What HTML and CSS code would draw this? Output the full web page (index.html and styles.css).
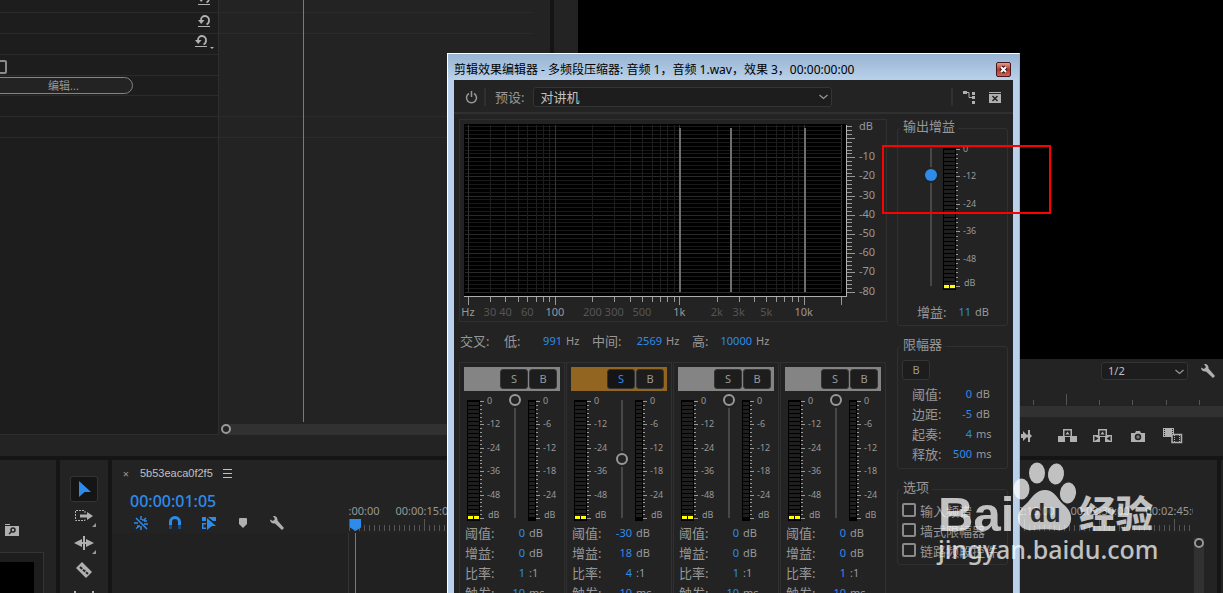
FILE: index.html
```html
<!DOCTYPE html>
<html lang="zh-CN">
<head>
    <meta charset="UTF-8" />
    <meta name="viewport" content="width=device-width, initial-scale=1.0"/>
    <title>剪辑效果编辑器</title>
    <link rel="stylesheet" href="styles.css">
</head>
<body>
    <div class="workspace">
        <div class="upper">
            <section class="effect-controls">
                <div class="props">
                    <div class="prop"><button class="reset" aria-label="重置"><svg width="13" height="13"><use href="#i-reset"/></svg></button></div>
                    <div class="prop"><button class="reset" aria-label="重置"><svg width="13" height="13"><use href="#i-reset"/></svg></button></div>
                    <div class="prop"><button class="reset menu" aria-label="重置"><svg width="13" height="13"><use href="#i-reset"/></svg></button></div>
                    <div class="prop"><input type="checkbox" class="tick" aria-label="旁路"></div>
                    <div class="prop short"><button class="edit">编辑...</button></div>
                    <div class="prop"></div>
                    <div class="prop"></div>
                </div>
                <div class="keyframes">
                    <div class="lane"></div>
                    <div class="lane"></div>
                    <div class="lane tall"></div>
                    <div class="lane"></div>
                    <div class="needle"></div>
                    <div class="zoombar"><i class="ring"></i></div>
                </div>
            </section>

            <section class="monitor">
                <div class="preview"></div>
                <div class="monitor-options">
                    <div class="drop quality">
                        <select aria-label="回放分辨率"><option>1/2</option></select>
                        <svg width="9" height="6"><use href="#i-chevron"/></svg>
                    </div>
                    <button class="icon-btn" aria-label="设置"><svg width="16" height="16"><use href="#i-wrench"/></svg></button>
                </div>
                <svg class="monitor-ruler" id="monitorRuler"></svg>
                <div class="monitor-scroll"></div>
                <div class="transport">
                    <button class="icon-btn" aria-label="转到出点"><svg width="20" height="16" fill="#b0b0b0"><path d="M-2 6h2V3l5 5-5 5v-3h-2zM5 2h2v4l2 2-2 2v4H5v-4L3 8l2-2z"/></svg></button>
                    <button class="icon-btn" aria-label="提升"><svg width="20" height="16" fill="#b0b0b0"><path d="M0 8h5V1h9v7h5v6h-7V9H7v5H0zM6.500 2.500V8h6V2.500z" fill-rule="evenodd"/><path d="M9.500 3.500l2 3h-4z"/></svg></button>
                    <button class="icon-btn" aria-label="提取"><svg width="20" height="16" fill="#b0b0b0"><path d="M0 7h5V1h9v6h5v7h-7V9H7v5H0zM6.500 2.500V8h6V2.500z" fill-rule="evenodd"/><path d="M9.500 3.500l2 3h-4z"/><path fill="#232323" d="M1.500 8l4 2.500-4 2.500zM17.500 8l-4 2.500 4 2.500z"/></svg></button>
                    <button class="icon-btn" aria-label="导出帧"><svg width="20" height="16"><path fill="#b0b0b0" d="M3 5h4l1-2h4l1 2h4v9H3z"/><circle cx="10" cy="9" r="2.500" fill="#777" stroke="#232323" stroke-width="1.500"/></svg></button>
                    <button class="icon-btn" aria-label="比较视图"><svg width="20" height="18"><path fill="#b0b0b0" d="M0 1h11v9H0z"/><path stroke="#232323" stroke-dasharray="1 1" d="M1.500 2v8M9.500 2v8"/><path fill="#232323" stroke="#b0b0b0" stroke-width="1.500" d="M9 7.500h9.500v8H9z"/><path stroke="#b0b0b0" stroke-dasharray="1 1" d="M11.500 8v8M16.500 8v8"/></svg></button>
                </div>
            </section>
        </div>

        <div class="lower">
            <section class="project">
                <button class="icon-btn bin" aria-label="搜索素材箱"><svg width="15" height="12"><path fill="#b0b0b0" d="M0 0h5v1H0zM0 2h14v10H0z"/><circle cx="8" cy="6" r="2" fill="none" stroke="#232323" stroke-width="1.500"/><path stroke="#232323" stroke-width="1.500" d="M6.500 7.500L4 10"/></svg></button>
                <div class="thumbs"><div class="thumb"></div></div>
            </section>

            <section class="tools">
                <button class="tool active" aria-label="选择工具"><svg width="20" height="20"><path fill="#2d8ceb" d="M5 2l12 11h-6.500L5 18z"/></svg></button>
                <button class="tool more" aria-label="轨道选择工具"><svg width="20" height="20"><path fill="none" stroke="#b0b0b0" stroke-dasharray="2 1" d="M10 4.500H1.500v10H11V13M11 7V4"/><path fill="#b0b0b0" d="M6 8.500h7V6l6 4-6 4v-2.500H6z"/></svg></button>
                <button class="tool more" aria-label="波纹编辑工具"><svg width="20" height="20" fill="#b0b0b0"><path d="M9 3h2v14H9zM0 10l8-4v3h4V6l8 4-8 4v-3H8v3z"/></svg></button>
                <button class="tool" aria-label="剃刀工具"><svg width="20" height="20"><path fill="#b0b0b0" d="M2 8l6-6 10 10-6 6z"/><path stroke="#232323" stroke-width="2" stroke-dasharray="3 1" d="M6 7l8 7"/></svg></button>
                <button class="tool" aria-label="外滑工具"><svg width="20" height="20" fill="#b0b0b0"><path d="M0 4h2v12H0zM18 4h2v12h-2zM2 9h16v2H2z"/></svg></button>
            </section>

            <section class="timeline">
                <div class="sequence">
                    <div class="tab">
                        <button class="close-tab" aria-label="关闭序列">×</button>
                        <span>5b53eaca0f2f5</span>
                        <svg width="9" height="9"><path stroke="#c0c0c0" d="M0 .5h9M0 4.500h9M0 8.500h9"/></svg>
                    </div>
                    <div class="timecode">00:00:01:05</div>
                    <div class="switches">
                        <button class="icon-btn" aria-label="嵌套"><svg width="16" height="16" stroke="#2d8ceb" stroke-width="1.500"><path d="M8 1v4M8 11v4M1 8h4M11 6h3M11 9h4M3 3l11 11M4 11h3M3 13.500l3-2M13 3l-2.500 2.500M9 5h3"/></svg></button>
                        <button class="icon-btn" aria-label="对齐"><svg width="16" height="16" fill="none" stroke-width="3"><path stroke="#2d8ceb" d="M3.500 10V7a4.500 4.500 0 0 1 9 0v3"/><path stroke="#1c4c7c" d="M3.500 10v4M12.500 10v4"/></svg></button>
                        <button class="icon-btn" aria-label="链接选择项"><svg width="16" height="16" fill="#2d8ceb"><path d="M1 2h4v4H1zM7 2h8v4h-3L7 2zM1 8h4v1.500H2.500v3H5V14H1zM6 3l9 8h-4l-5 4z"/></svg></button>
                        <button class="icon-btn" aria-label="添加标记"><svg width="16" height="16"><path fill="#b0b0b0" d="M4 4q0-1 1-1h6q1 0 1 1v5l-4 4-4-4z"/></svg></button>
                        <button class="icon-btn" aria-label="时间轴设置"><svg width="16" height="16"><use href="#i-wrench"/></svg></button>
                    </div>
                </div>
                <div class="time-ruler">
                    <svg id="timeRuler"></svg>
                    <div class="playhead"></div>
                </div>
                <div class="track-heads"></div>
                <div class="tracks"></div>
                <div class="track-scroll"><i class="ring"></i></div>
            </section>
            <section class="audio-meters"></section>
        </div>
    </div>

    <div class="window">
        <div class="titlebar">
            <span>剪辑效果编辑器 - 多频段压缩器: 音频 1，音频 1.wav，效果 3，00:00:00:00</span>
            <button class="close-window" aria-label="关闭"><svg width="9" height="9"><path d="M2 2l5 5M7 2L2 7" stroke="#3a1018" stroke-width="4"/><path d="M2 2l5 5M7 2L2 7" stroke="#fff" stroke-width="2"/></svg></button>
        </div>
        <div class="client">
            <div class="toolbar">
                <button class="icon-btn" aria-label="电源"><svg width="13" height="13" fill="none" stroke="#989898" stroke-width="1.500"><path d="M4 2.500a5 5 0 1 0 5 0M6.500 0v6"/></svg></button>
                <i class="divider"></i>
                <label for="preset">预设:</label>
                <div class="drop preset">
                    <select id="preset"><option>对讲机</option></select>
                    <svg width="9" height="6"><use href="#i-chevron"/></svg>
                </div>
                <i class="divider push"></i>
                <button class="icon-btn" aria-label="通道映射"><svg width="13" height="13" fill="#b0b0b0"><path d="M0 0h4v3H0zM9 1h3v3H9zM9 5h3v3H9zM9 10h3v3H9z"/><path d="M3 1.500h3v5h4" fill="none" stroke="#b0b0b0"/></svg></button>
                <button class="icon-btn" aria-label="切换"><svg width="13" height="13"><path fill="#b0b0b0" d="M0 1h12v1H0zM0 3h12v9H0z"/><path stroke="#232323" stroke-width="1.500" d="M3.500 5l5 5M8.500 5l-5 5"/></svg></button>
            </div>

            <div class="compressor">
                <div class="main-col">
                    <div class="graph"><svg id="graph" width="426" height="201"></svg></div>
                    <div class="crossover">
                        <span>交叉:</span>
                        <span>低:</span><b>991</b><em>Hz</em>
                        <span>中间:</span><b>2569</b><em>Hz</em>
                        <span>高:</span><b>10000</b><em>Hz</em>
                    </div>
                    <div class="bands" id="bands"></div>
                </div>

                <div class="side-col">
                    <fieldset class="output">
                        <legend>输出增益</legend>
                        <div class="meters">
                            <input type="range" class="fader" min="-18" max="18" value="11" aria-label="输出增益">
                            <svg class="meter" id="outputMeter" width="40" height="142"></svg>
                        </div>
                        <div class="param"><span>增益:</span><b>11</b><em>dB</em></div>
                    </fieldset>
                    <fieldset class="limiter">
                        <legend>限幅器</legend>
                        <button class="flat">B</button>
                        <div class="param"><span>阈值:</span><b>0</b><em>dB</em></div>
                        <div class="param"><span>边距:</span><b>-5</b><em>dB</em></div>
                        <div class="param"><span>起奏:</span><b>4</b><em>ms</em></div>
                        <div class="param"><span>释放:</span><b>500</b><em>ms</em></div>
                    </fieldset>
                    <fieldset class="options">
                        <legend>选项</legend>
                        <label><input type="checkbox" class="tick">输入频谱</label>
                        <label><input type="checkbox" class="tick">墙式限幅器</label>
                        <label><input type="checkbox" class="tick">链路频段控件</label>
                    </fieldset>
                </div>
            </div>
        </div>
    </div>

    <div class="highlight"></div>

    <div class="watermark">
        <div class="brand">
            <span class="bai">Bai</span>
            <span class="paw">
                <svg width="64" height="70" fill="#fff">
                    <ellipse cx="8.500" cy="27" rx="8" ry="10.500"/>
                    <ellipse cx="24" cy="11" rx="8" ry="10.500"/>
                    <ellipse cx="43" cy="12" rx="8" ry="10.500" transform="rotate(8 43 12)"/>
                    <ellipse cx="55" cy="31" rx="8" ry="10.500" transform="rotate(8 55 31)"/>
                    <path d="M32 28c8 0 11 6 16 12 5 5 11 9 10 18-1 8-7 11-14 10-8-1-16-1-24 0-8 1-14-3-15-10-1-9 5-13 10-18 5-6 9-12 17-12z"/>
                </svg>
                <i>du</i>
            </span>
            <span class="jy">经验</span>
        </div>
        <div class="site">jingyan.baidu.com</div>
    </div>

    <svg class="defs" width="0" height="0">
        <symbol id="i-reset" viewBox="0 0 13 13"><path fill="none" stroke="#b0b0b0" stroke-width="1.800" d="M3 6V5a4 4 0 0 1 4-4 4 4 0 0 1 4 4.500q0 3-2.500 4"/><path fill="#b0b0b0" d="M0 5h6.500L3.200 9zM0 11h12v1H0z"/></symbol>
        <symbol id="i-chevron" viewBox="0 0 9 6"><path fill="none" stroke="#989898" stroke-width="1.200" d="M.5 1l4 3.500 4-3.500"/></symbol>
        <symbol id="i-wrench" viewBox="0 0 16 16"><path fill="#b0b0b0" d="M4 1C6.500.5 9 2.500 8.500 5.500l6.500 7.500-2 2L6 8.500C3.500 9 1 7.500 1 4.500l3 1.500L6 4z"/></symbol>
    </svg>

    <script>
        const NS = 'http://www.w3.org/2000/svg';

        function add(svg, tag, attrs, text) {
            const el = document.createElementNS(NS, tag);
            for (const key in attrs) el.setAttribute(key, attrs[key]);
            if (text !== undefined) el.textContent = text;
            svg.appendChild(el);
        }

        function rect(svg, x, y, width, height, fill) {
            add(svg, 'rect', { x: Math.round(x), y: Math.round(y), width, height, fill });
        }

        // Frequency response grid
        function drawGraph() {
            const svg = document.getElementById('graph');
            const fx = hz => 8 + Math.log10(hz / 20) * 124.4;
            const dy = db => 18 - db * 1.92;
            const freqs = [20];
            for (let d = 10; d <= 1000; d *= 10) {
                for (let n = d === 10 ? 3 : 2; n <= 10; n++) freqs.push(n * d);
            }
            freqs.push(20000);
            const isMajor = hz => [20, 100, 1000, 10000, 20000].includes(hz);

            rect(svg, 4, 4, 382, 173, '#000');
            for (let db = 6; db >= -80; db -= 2) {
                const major = db % 10 === 0;
                rect(svg, 5, dy(db), 377, 1, major ? '#2a2a2a' : '#191919');
                rect(svg, 387, dy(db), major ? 8 : 5, 1, '#989898');
                if (major && db < 0) add(svg, 'text', { x: 399, y: dy(db) + 3 }, db);
            }
            freqs.forEach(hz => {
                rect(svg, fx(hz), 5, 1, 168, isMajor(hz) ? '#333' : '#1e1e1e');
                rect(svg, fx(hz), 177, 1, isMajor(hz) ? 8 : 5, '#989898');
            });
            [991, 2569, 10000].forEach(hz => rect(svg, fx(hz), 8, 2, 164, '#6e6e6e'));
            rect(svg, 4, 176, 383, 1, '#b0b0b0');
            rect(svg, 386, 5, 1, 172, '#b0b0b0');

            add(svg, 'text', { x: 399, y: 10 }, 'dB');
            const names = { 20: 'Hz', 30: '30', 40: '40', 60: '60', 100: '100', 200: '200', 300: '300', 500: '500', 1000: '1k', 2000: '2k', 3000: '3k', 5000: '5k', 10000: '10k' };
            for (const hz in names) {
                add(svg, 'text', { x: fx(hz), y: 196, 'text-anchor': 'middle', class: isMajor(+hz) ? '' : 'dim' }, names[hz]);
            }
        }

        // Level meter: bar, scale and labels
        function drawMeter(svg, width, height, step, labels, lit) {
            rect(svg, 0, 0, width, height, '#000');
            for (let y = 2; y < height - 3; y += 4) rect(svg, 1, y, width - 2, 3, '#1e1e1e');
            if (lit) {
                rect(svg, 1, height - 5, 5, 3, '#ff0');
                rect(svg, 7, height - 5, 5, 3, '#ff0');
            }
            for (let i = 0; i <= 30; i++) {
                rect(svg, width, 1 + i * step / 6, i % 6 ? 2 : 4, 1, '#989898');
            }
            labels.forEach((label, i) => add(svg, 'text', { x: width + 7, y: 4 + i * step }, label));
            add(svg, 'text', { x: width + 8, y: step * 5 + 1 }, 'dB');
        }

        const bands = [
            { threshold: 0, gain: 0, ratio: 1, attack: 10 },
            { threshold: -30, gain: 18, ratio: 4, attack: 10, solo: true },
            { threshold: 0, gain: 0, ratio: 1, attack: 10 },
            { threshold: 0, gain: 0, ratio: 1, attack: 10 }
        ];

        function param(name, value, unit) {
            return `<div class="param"><span>${name}:</span><b>${value}</b><em>${unit}</em></div>`;
        }

        function drawBands() {
            const container = document.getElementById('bands');
            bands.forEach(band => {
                const div = document.createElement('div');
                div.className = band.solo ? 'band solo' : 'band';
                div.innerHTML = `
                    <div class="band-head"><button>S</button><button>B</button></div>
                    <div class="meters">
                        <svg class="meter level" width="42" height="121"></svg>
                        <input type="range" class="fader" min="-60" max="0" value="${band.threshold}" aria-label="阈值">
                        <svg class="meter reduction" width="32" height="121"></svg>
                    </div>
                    ${param('阈值', band.threshold, 'dB')}
                    ${param('增益', band.gain, 'dB')}
                    ${param('比率', band.ratio, ':1')}
                    ${param('触发', band.attack, 'ms')}`;
                container.appendChild(div);
                drawMeter(div.querySelector('.level'), 13, 121, 23.4, [0, -12, -24, -36, -48], true);
                drawMeter(div.querySelector('.reduction'), 8, 121, 23.4, [0, -6, -12, -18, -24], false);
            });
        }

        function drawRulers() {
            const time = document.getElementById('timeRuler');
            for (let sec = 0; sec <= 168; sec++) {
                const major = sec % 15 === 0;
                rect(time, sec * 5, major ? 16 : 22, 1, major ? 12 : 6, '#555');
                if (major) {
                    const mm = String(Math.floor(sec / 60)).padStart(2, '0');
                    const ss = String(sec % 60).padStart(2, '0');
                    add(time, 'text', { x: sec * 5 + 1, y: 12, 'text-anchor': 'middle' }, `00:${mm}:${ss}:00`);
                }
            }
            const monitor = document.getElementById('monitorRuler');
            for (let i = 0; i < 20; i++) {
                const tall = i % 10 === 5;
                rect(monitor, 14 + i * 33.2, tall ? 11 : 17, 1, tall ? 11 : 5, '#555');
            }
        }

        drawGraph();
        drawBands();
        drawMeter(document.getElementById('outputMeter'), 13, 142, 27.4, [0, -12, -24, -36, -48], true);
        drawRulers();
    </script>
</body>
</html>
```
FILE: styles.css
```css
* {
    box-sizing: border-box;
}

body {
    margin: 0;
    height: 100vh;
    overflow: hidden;
    background: #151515;
    color: #989898;
    font-family: "Noto Sans", "Noto Sans CJK SC", sans-serif;
    font-size: 11px;
    position: relative;
}

button {
    margin: 0;
    padding: 0;
    border: none;
    background: none;
    color: inherit;
    font: inherit;
    cursor: pointer;
}

svg {
    display: block;
}

.defs {
    position: absolute;
}

.icon-btn {
    display: block;
}

.icon-btn svg {
    overflow: visible;
}

.ring {
    display: block;
    width: 10px;
    height: 10px;
    border: 2px solid #989898;
    border-radius: 50%;
    background: #232323;
}

.tick {
    appearance: none;
    width: 14px;
    height: 14px;
    margin: 0;
    border: 2px solid #8a8a8a;
    border-radius: 2px;
}

.drop {
    position: relative;
}

.drop select {
    appearance: none;
    display: block;
    width: 100%;
    height: 100%;
    padding: 0 6px 2px;
    border: 1px solid #343434;
    border-radius: 3px;
    background: #1d1d1d;
    color: #c0c0c0;
    font: inherit;
}

.drop svg {
    position: absolute;
    right: 4px;
    top: 7px;
    pointer-events: none;
}

/* Workspace */
.workspace {
    display: grid;
    grid-template-rows: 1fr 133px;
    gap: 4px;
    height: 100vh;
}

.upper {
    display: grid;
    grid-template-columns: 550px 1fr;
    gap: 4px;
    min-height: 0;
}

.lower {
    display: grid;
    grid-template-columns: 56px 48px 1fr 2px;
    gap: 4px;
    min-height: 0;
}

.lower > section {
    background: #232323;
    overflow: hidden;
}

.effect-controls {
    display: grid;
    grid-template-columns: 219px 1fr;
    padding: 0 17px 21px 0;
    background: #232323;
    overflow: hidden;
}

.props {
    background: #1d1d1d;
    border-right: 1px solid #2e2e2e;
    border-bottom: 1px solid #2e2e2e;
}

.prop {
    display: flex;
    align-items: center;
    height: 21px;
    border-bottom: 1px solid #2b2b2b;
}

.prop:first-child {
    height: 13px;
}

.prop.short {
    height: 20px;
}

.reset {
    margin: -4px 0 0 198px;
}

.prop:first-child .reset {
    margin-top: -14px;
}

.reset.menu {
    position: relative;
    margin: -6px 0 0 195px;
}

.reset.menu::after {
    content: "";
    position: absolute;
    left: 15px;
    top: 12px;
    border: 2px solid transparent;
    border-top-color: #b0b0b0;
}

.prop .tick {
    margin: 4px 0 0 -7px;
}

.edit {
    width: 153px;
    height: 17px;
    margin-left: -20px;
    padding-left: 14px;
    border: 1px solid #858585;
    border-radius: 9px;
    background: #232323;
    line-height: 12px;
}

.keyframes {
    position: relative;
    display: flex;
    flex-direction: column;
}

.lane {
    height: 21px;
    border-bottom: 1px solid #2b2b2b;
}

.lane:first-child {
    height: 13px;
}

.lane.tall {
    height: 83px;
}

.needle {
    position: absolute;
    left: 84px;
    top: 0;
    bottom: 13px;
    width: 1px;
    background: #2d8ceb;
}

.zoombar {
    height: 11px;
    margin-top: auto;
    margin-left: 7px;
    background: #313131;
}

.zoombar .ring {
    margin-left: -5px;
}

/* Program monitor */
.monitor {
    display: flex;
    flex-direction: column;
    background: #232323;
    overflow: hidden;
}

.preview {
    flex: 1;
    margin-left: 24px;
    background: #000;
}

.monitor-options {
    display: flex;
    align-items: center;
    justify-content: flex-end;
    gap: 12px;
    height: 24px;
    padding-right: 7px;
}

.quality {
    width: 87px;
    height: 18px;
}

.monitor-ruler {
    width: 100%;
    height: 23px;
}

.monitor-scroll {
    height: 11px;
    background: #313131;
}

.transport {
    display: flex;
    justify-content: flex-end;
    align-items: center;
    gap: 15px;
    height: 39px;
    padding: 0 40px 2px 0;
}

/* Project and tools */
.project {
    display: flex;
    flex-direction: column;
}

.bin {
    margin: 64px 0 0 5px;
    align-self: flex-start;
}

.thumbs {
    flex: 1;
    width: 44px;
    margin-top: 16px;
    padding-top: 9px;
    border: 1px solid #343434;
    border-width: 1px 1px 0 0;
    background: #1d1d1d;
}

.thumb {
    width: 34px;
    height: 100%;
    background: #000;
}

.tools {
    display: flex;
    flex-direction: column;
    align-items: center;
    gap: 1px;
    padding-top: 16px;
}

.tool {
    position: relative;
    display: grid;
    place-items: center;
    flex: none;
    width: 28px;
    height: 26px;
    border-radius: 3px;
}

.tool.active {
    border: 1px solid #343434;
    background: #151515;
}

.tool.more::after {
    content: "";
    position: absolute;
    right: 2px;
    bottom: 2px;
    border: 2px solid;
    border-color: transparent #989898 #989898 transparent;
}

/* Timeline */
.timeline {
    display: grid;
    grid-template-columns: 236px 1fr 24px;
    grid-template-rows: 73px 1fr;
}

.sequence {
    padding-left: 10px;
}

.tab {
    display: flex;
    align-items: center;
    gap: 10px;
    height: 26px;
    color: #c0c0c0;
}

.tab span {
    font-family: "Liberation Sans", sans-serif;
}

.close-tab {
    width: 8px;
    color: #989898;
}

.timecode {
    padding-left: 8px;
    height: 29px;
    color: #2d8ceb;
    font-size: 16px;
    font-weight: 500;
    line-height: 30px;
}

.switches {
    display: flex;
    gap: 18px;
    padding-left: 11px;
}

.time-ruler {
    position: relative;
    margin-left: 1px;
    padding-top: 43px;
}

.time-ruler svg {
    width: 100%;
    height: 30px;
    fill: #989898;
}

.playhead {
    position: absolute;
    left: 1px;
    top: 59px;
    width: 11px;
    height: 12px;
    background: #2d8ceb;
    clip-path: polygon(0 0, 100% 0, 100% 70%, 50% 100%, 0 70%);
}

.track-heads {
    grid-column: 1;
    background: #212121;
}

.tracks {
    border-left: 1px solid #343434;
    background: linear-gradient(#2d8ceb, #2d8ceb) 6px 0 / 1px 100% no-repeat #212121;
}

.track-scroll {
    width: 10px;
    margin: 5px 0 0 1px;
    background: #313131;
}

/* Effect editor window */
.window {
    position: absolute;
    left: 447px;
    top: 53px;
    bottom: 0;
    width: 573px;
    padding: 0 6px;
    border: 1px solid #fff;
    border-right-color: #5ac8e8;
    border-bottom: none;
    background: linear-gradient(#98b4d2, #b9d1ea 26px);
    overflow: hidden;
}

.titlebar {
    display: flex;
    align-items: center;
    justify-content: space-between;
    height: 26px;
    padding: 4px 2px 0 0;
    color: #000;
    font-size: 12px;
    white-space: nowrap;
}

.close-window {
    display: grid;
    place-items: center;
    width: 15px;
    height: 15px;
    border: 1px solid #4a1420;
    border-radius: 2px;
    background: linear-gradient(#e0a090, #b83828 50%, #c86850);
}

.client {
    background: #232323;
    font-size: 11px;
}

.toolbar {
    display: flex;
    align-items: center;
    height: 34px;
    padding: 2px 11px 0;
    border-bottom: 2px solid #303030;
    font-size: 13px;
}

.toolbar label {
    padding-bottom: 2px;
}

.divider {
    width: 2px;
    height: 18px;
    margin: 0 9px 0 6px;
    background: #303030;
}

.divider.push {
    margin-left: auto;
    margin-right: 10px;
}

.toolbar .icon-btn + .icon-btn {
    margin-left: 13px;
}

.preset {
    width: 299px;
    height: 20px;
    margin-left: 9px;
}

.compressor {
    display: grid;
    grid-template-columns: 428px 111px;
    gap: 10px;
    padding: 5px;
}

.graph {
    border: 1px solid #303030;
}

.graph text {
    fill: #989898;
}

.graph .dim {
    fill: #555;
}

b {
    color: #2d8ceb;
    font-weight: 400;
    text-align: right;
}

em {
    padding-left: 4px;
    font-style: normal;
}

.crossover {
    display: grid;
    grid-template-columns: 44px 24px 34px 30px 36px 34px 30px 24px 36px auto;
    align-items: center;
    height: 40px;
    padding: 0 0 4px 1px;
}

.crossover span,
.param span {
    font-size: 13px;
}

.bands {
    display: grid;
    grid-template-columns: repeat(4, 106px);
    gap: 1px;
}

.band {
    padding: 4px;
    border: 1px solid #303030;
}

.band-head {
    display: flex;
    justify-content: flex-end;
    gap: 1px;
    height: 24px;
    padding: 2px 3px 2px 2px;
    background: #848484;
}

.band-head button,
.flat {
    width: 28px;
    height: 20px;
    padding-bottom: 2px;
    border: 1px solid #343434;
    border-radius: 3px;
    background: #1d1d1d;
    color: #989898;
}

.solo .band-head {
    background: #926521;
}

.solo .band-head button:first-child {
    background: #151515;
    color: #2d8ceb;
}

.meters {
    display: flex;
    align-items: flex-start;
}

.band .meters {
    height: 131px;
    padding: 9px 0 0 3px;
}

.meter {
    overflow: visible;
    flex: none;
}

.meter text {
    fill: #989898;
    font-size: 9px;
}

.fader {
    appearance: none;
    writing-mode: vertical-lr;
    direction: rtl;
    width: 12px;
    height: 130px;
    margin: -6px 7px 0 0;
    background: linear-gradient(#484848, #484848) center / 2px calc(100% - 12px) no-repeat;
}

.fader::-webkit-slider-thumb {
    appearance: none;
    width: 12px;
    height: 12px;
    border: 2px solid #989898;
    border-radius: 50%;
    background: #232323;
    box-shadow: 0 0 0 2px #232323;
}

.param {
    display: grid;
    grid-template-columns: 30px 30px auto;
    align-items: center;
    height: 20px;
    padding-left: 1px;
    white-space: nowrap;
}

fieldset {
    min-width: 0;
    margin: 0 0 11px;
    padding: 0 4px 4px;
    border: 1px solid #303030;
    border-radius: 3px;
}

legend {
    margin-left: -2px;
    padding: 0 3px 4px;
    font-size: 13px;
    line-height: 14px;
}

.output .meters {
    padding: 11px 0 9px 23px;
}

.output .fader {
    height: 150px;
    margin: -6px 6px 0 0;
}

.output .fader::-webkit-slider-thumb {
    border: none;
    background: #2d8ceb;
}

.output .param {
    grid-template-columns: 30px 24px auto;
    padding-left: 15px;
}

.limiter {
    padding-bottom: 5px;
}

.limiter .param {
    padding-left: 10px;
}

.limiter .flat {
    display: block;
    margin: 5px 0 3px;
}

.options label {
    display: flex;
    align-items: center;
    gap: 4px;
    height: 20px;
    font-size: 13px;
    white-space: nowrap;
}

.options legend + label {
    margin-top: 2px;
}

/* Marked area */
.highlight {
    position: absolute;
    left: 882px;
    top: 145px;
    width: 169px;
    height: 69px;
    border: 2px solid #f00;
}

.watermark {
    position: absolute;
    left: 938px;
    top: 462px;
    color: #fff;
    opacity: .72;
    pointer-events: none;
}

.brand {
    display: flex;
    align-items: flex-end;
    height: 70px;
    white-space: nowrap;
}

.bai {
    font: bold 49px/36px "Liberation Sans", sans-serif;
    width: 75px;
}

.paw {
    position: relative;
    margin-right: 2px;
}

.paw i {
    position: absolute;
    left: 17px;
    top: 37px;
    color: #333;
    font: bold 25px/28px "Liberation Sans", sans-serif;
}

.jy {
    font: 900 37px/40px "Noto Sans CJK SC", sans-serif;
}

.site {
    font-size: 25px;
    font-weight: 500;
    line-height: 34px;
}
```
